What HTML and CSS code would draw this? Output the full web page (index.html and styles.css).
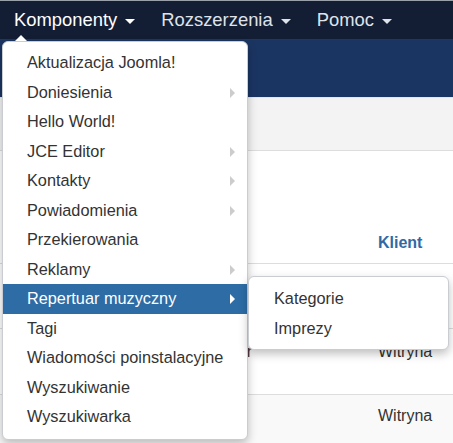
FILE: index.html
```html
<!DOCTYPE html>
<html lang="pl">
<head>
<meta charset="utf-8">
<title>Joomla</title>
<link rel="stylesheet" href="styles.css">
</head>
<body>
<nav class="navbar">
  <div class="nav-item active">Komponenty <span class="caret"></span>
    <span class="menu-pointer"></span>
  </div>
  <div class="nav-item">Rozszerzenia <span class="caret"></span></div>
  <div class="nav-item">Pomoc <span class="caret"></span></div>
</nav>
<header class="band"></header>
<div class="toolbar"></div>
<main class="content">
  <table class="grid">
    <thead><tr><th class="c-main"></th><th class="c-client">Klient</th></tr></thead>
    <tbody>
      <tr class="r1"><td></td><td></td></tr>
      <tr class="r2"><td class="c-main">r</td><td>Witryna</td></tr>
      <tr class="r3 alt"><td></td><td>Witryna</td></tr>
    </tbody>
  </table>
</main>

<ul class="dropdown">
  <li>Aktualizacja Joomla!</li>
  <li class="sub">Doniesienia</li>
  <li>Hello World!</li>
  <li class="sub">JCE Editor</li>
  <li class="sub">Kontakty</li>
  <li class="sub">Powiadomienia</li>
  <li>Przekierowania</li>
  <li class="sub">Reklamy</li>
  <li class="sub selected">Repertuar muzyczny
    <ul class="submenu">
      <li>Kategorie</li>
      <li>Imprezy</li>
    </ul>
  </li>
  <li>Tagi</li>
  <li>Wiadomości poinstalacyjne</li>
  <li>Wyszukiwanie</li>
  <li>Wyszukiwarka</li>
</ul>
</body>
</html>
```
FILE: styles.css
```css
* { box-sizing: border-box; }
html, body { margin: 0; padding: 0; }
body {
  font-family: "Liberation Sans", Arial, sans-serif;
  background: #fff;
  color: #333;
  width: 453px;
  height: 443px;
  overflow: hidden;
  position: relative;
}
.navbar {
  height: 40px;
  background: #131e35;
  border-top: 1px solid #9aa0aa;
  border-bottom: 1px solid #24365a;
  display: flex;
  align-items: center;
  padding-left: 14px;
}
.nav-item {
  position: relative;
  color: #dfe3ea;
  font-size: 18.4px;
  margin-right: 26px;
  display: flex;
  align-items: center;
  gap: 8px;
  height: 100%;
}
.nav-item.active { color: #fff; }
.caret {
  width: 0; height: 0;
  border-left: 5px solid transparent;
  border-right: 5px solid transparent;
  border-top: 5px solid currentColor;
  margin-top: 2px;
}
.menu-pointer {
  position: absolute;
  left: 1px;
  bottom: -2px;
  width: 0; height: 0;
  border-left: 6px solid transparent;
  border-right: 6px solid transparent;
  border-bottom: 6px solid #fff;
  z-index: 5;
}
.band {
  height: 57px;
  background: #1b3562;
}
.toolbar {
  height: 54px;
  background: #f3f3f3;
  border-top: 1px solid #e3e6ea;
  border-bottom: 1px solid #ddd;
}
.grid {
  width: 100%;
  border-collapse: collapse;
  font-size: 16px;
}
.grid th {
  height: 112px;
  vertical-align: bottom;
  padding: 0 0 11px 0;
  text-align: left;
  color: #2f6aa4;
  font-weight: bold;
  font-size: 16px;
  border-bottom: 1px solid #ddd;
}
.grid th.c-client { width: 105px; padding-left: 30px; }
.grid td { border-bottom: 1px solid #ddd; color: #333; }
.grid td:last-child { padding-left: 30px; }
.grid td.c-main { text-align: right; padding-right: 96px; }
.grid .r1 td { height: 65px; }
.grid .r2 td { height: 66px; vertical-align: top; padding-top: 14px; }
.grid .r3 td { height: 60px; vertical-align: top; padding-top: 12px; }
.grid tr.alt td { background: #f9f9f9; }

.dropdown {
  position: absolute;
  top: 41px;
  left: 2px;
  width: 246px;
  margin: 0;
  padding: 6px 0 7px;
  list-style: none;
  background: #fff;
  border: 1px solid #c9ccd1;
  border-radius: 6px;
  box-shadow: 0 4px 10px rgba(0,0,0,0.25);
  z-index: 4;
}
.dropdown > li {
  position: relative;
  height: 29.5px;
  line-height: 29.5px;
  padding-left: 24px;
  font-size: 16.3px;
  color: #333;
}
.dropdown > li.sub::after {
  content: "";
  position: absolute;
  right: 12px;
  top: 10px;
  width: 0; height: 0;
  border-top: 5px solid transparent;
  border-bottom: 5px solid transparent;
  border-left: 5px solid #ccc;
}
.dropdown > li.selected {
  background: #2d6ca5;
  color: #fff;
}
.dropdown > li.selected::after { border-left-color: #fff; }
.submenu {
  position: absolute;
  left: 245px;
  top: -8px;
  width: 201px;
  margin: 0;
  padding: 7px 0 6px;
  list-style: none;
  background: #fff;
  border: 1px solid #c9ccd1;
  border-radius: 6px;
  box-shadow: 0 4px 10px rgba(0,0,0,0.25);
}
.submenu li {
  height: 29.5px;
  line-height: 29.5px;
  padding-left: 25px;
  font-size: 16.3px;
  color: #333;
}
```
